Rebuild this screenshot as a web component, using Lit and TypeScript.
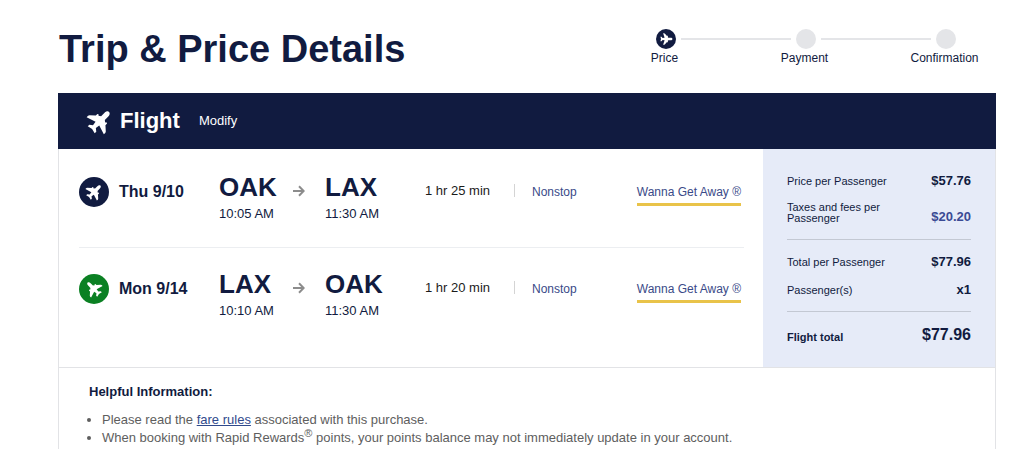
import { LitElement, html, css } from "lit";
import { customElement, property } from "lit/decorators.js";

type Heading = "north-east" | "north-west" | "east";

@customElement("plane-icon")
class PlaneIcon extends LitElement {
  @property({ reflect: true }) heading: Heading = "north-east";

  static styles = css`
    :host {
      display: block;
      flex: none;
      width: 24px;
      height: 24px;
    }
    svg {
      display: block;
      width: 100%;
      height: 100%;
      fill: currentColor;
      transform: rotate(45deg);
    }
    :host([heading="north-west"]) svg {
      transform: rotate(-45deg);
    }
    :host([heading="east"]) svg {
      transform: rotate(90deg);
    }
  `;

  render() {
    return html`<svg viewBox="-12 -12 24 24" overflow="visible" aria-hidden="true">
      <path
        d="M0-15.5C1.9-15.5 3-13.4 3-11.2V-5.6L5.6-3.6V-4.4Q6.7-5.5 7.8-4.4V-1.8L13.2 3Q14.3 4.2 13.9 6.9L3 3.4 2.3 8.2 5.6 10.8V13.4L0 12-5.6 13.4V10.8L-2.3 8.2-3 3.4-13.9 6.9Q-14.3 4.2-13.2 3L-7.8-1.8V-4.4Q-6.7-5.5-5.6-4.4V-3.6L-3-5.6V-11.2C-3-13.4-1.9-15.5 0-15.5Z"
      />
    </svg>`;
  }
}

@customElement("booking-steps")
class BookingSteps extends LitElement {
  static styles = css`
    ol {
      display: grid;
      grid-template-columns: repeat(3, 140px);
      margin: 0;
      padding: 0;
      list-style: none;
      font-size: 12px;
      line-height: 18px;
    }
    li {
      display: grid;
      grid-template-columns: 1fr 20px 1fr;
      align-items: center;
      column-gap: 5px;
    }
    .line {
      height: 2px;
      background: #e4e5e8;
    }
    .line.blank {
      background: none;
    }
    .dot {
      display: grid;
      place-items: center;
      height: 20px;
      border-radius: 50%;
      background: #e4e5e8;
      color: #fff;
    }
    .dot.current {
      background: #111b40;
    }
    .dot plane-icon {
      width: 10px;
      height: 10px;
    }
    .label {
      grid-column: 1 / -1;
      padding-right: 3px;
      text-align: center;
    }
  `;

  render() {
    const steps = ["Price", "Payment", "Confirmation"];
    return html`<ol>
      ${steps.map(
        (step, i) => html`<li>
          <span class="line ${i === 0 ? "blank" : ""}"></span>
          <span class="dot ${i === 0 ? "current" : ""}">
            ${i === 0 ? html`<plane-icon heading="east"></plane-icon>` : ""}
          </span>
          <span class="line ${i === steps.length - 1 ? "blank" : ""}"></span>
          <span class="label">${step}</span>
        </li>`
      )}
    </ol>`;
  }
}

interface Leg {
  date: string;
  from: string;
  departs: string;
  to: string;
  arrives: string;
  duration: string;
  returning: boolean;
}

@customElement("flight-leg")
class FlightLeg extends LitElement {
  @property({ attribute: false }) leg!: Leg;

  static styles = css`
    :host {
      display: grid;
      grid-template-columns: 30px 110px 74px 32px 100px 89px 18px 1fr auto;
      align-items: start;
      height: 98px;
      box-sizing: border-box;
      padding: 23px 3px 0 0;
    }
    .badge {
      display: grid;
      place-items: center;
      width: 30px;
      height: 30px;
      margin-top: 5px;
      border-radius: 50%;
      background: #111b40;
      color: #fff;
    }
    .badge.returning {
      background: #0b8023;
    }
    .badge plane-icon {
      width: 14px;
      height: 14px;
    }
    .date {
      margin: 10px 0 0 10px;
      font-size: 16px;
      line-height: 20px;
      font-weight: bold;
    }
    .code {
      font-size: 26px;
      line-height: 30px;
      font-weight: bold;
    }
    .time {
      font-size: 13px;
      line-height: 24px;
    }
    .arrow {
      margin-top: 13px;
      width: 12px;
      height: 12px;
      fill: none;
      stroke: #8c8c8c;
      stroke-width: 2;
    }
    .duration {
      margin-top: 11px;
      color: #1b1b1b;
      font-size: 13px;
      line-height: 16px;
    }
    .divider {
      width: 1px;
      height: 13px;
      margin-top: 12px;
      background: #d4d4d4;
    }
    button {
      margin: 11px 0 0;
      padding: 0;
      border: 0;
      background: none;
      color: #3a4a88;
      font: 12px/18px "Liberation Sans", Arial, sans-serif;
      text-align: left;
      cursor: pointer;
      justify-self: start;
    }
    .fare {
      padding-bottom: 2px;
      border-bottom: 3px solid #e9c349;
    }
  `;

  render() {
    const l = this.leg;
    return html`
      <span class="badge ${l.returning ? "returning" : ""}">
        <plane-icon heading=${l.returning ? "north-west" : "north-east"}></plane-icon>
      </span>
      <span class="date">${l.date}</span>
      <div>
        <div class="code">${l.from}</div>
        <div class="time">${l.departs}</div>
      </div>
      <svg class="arrow" viewBox="0 0 12 12" aria-hidden="true">
        <path d="M0 6H10.5M6 1.3 10.7 6 6 10.7" />
      </svg>
      <div>
        <div class="code">${l.to}</div>
        <div class="time">${l.arrives}</div>
      </div>
      <span class="duration">${l.duration}</span>
      <span class="divider"></span>
      <button type="button">Nonstop</button>
      <button type="button" class="fare">Wanna Get Away ®</button>
    `;
  }
}

@customElement("price-summary")
class PriceSummary extends LitElement {
  static styles = css`
    :host {
      display: block;
      padding: 20px 24px;
      background: #e6ebf8;
    }
    dl {
      margin: 0;
    }
    .row {
      display: flex;
      justify-content: space-between;
      align-items: center;
      height: 24px;
    }
    .row + .row {
      margin-top: 4px;
    }
    .row.tall {
      height: 28px;
      align-items: end;
    }
    .row.tall dt {
      padding-bottom: 1px;
    }
    .group + .group {
      margin-top: 14px;
      padding-top: 10px;
      border-top: 1px solid #c3c8d3;
    }
    dt {
      max-width: 110px;
      font-size: 11px;
      line-height: 11px;
    }
    dd {
      margin: 0;
      font-size: 13px;
      line-height: 16px;
      font-weight: bold;
    }
    button {
      padding: 0;
      border: 0;
      background: none;
      color: #3a4a94;
      font: inherit;
      cursor: pointer;
    }
    .group + .group.total {
      margin-top: 9px;
      padding-top: 11px;
    }
    .total dt {
      padding-top: 4px;
      font-weight: bold;
    }
    .total dd {
      font-size: 16px;
    }
  `;

  render() {
    return html`<dl>
      <div class="group">
        <div class="row"><dt>Price per Passenger</dt><dd>$57.76</dd></div>
        <div class="row tall">
          <dt>Taxes and fees per Passenger</dt>
          <dd><button type="button">$20.20</button></dd>
        </div>
      </div>
      <div class="group">
        <div class="row"><dt>Total per Passenger</dt><dd>$77.96</dd></div>
        <div class="row"><dt>Passenger(s)</dt><dd>x1</dd></div>
      </div>
      <div class="group total">
        <div class="row"><dt>Flight total</dt><dd>$77.96</dd></div>
      </div>
    </dl>`;
  }
}

@customElement("app-root")
class AppRoot extends LitElement {
  private legs: Leg[] = [
    {
      date: "Thu 9/10",
      from: "OAK",
      departs: "10:05 AM",
      to: "LAX",
      arrives: "11:30 AM",
      duration: "1 hr 25 min",
      returning: false,
    },
    {
      date: "Mon 9/14",
      from: "LAX",
      departs: "10:10 AM",
      to: "OAK",
      arrives: "11:30 AM",
      duration: "1 hr 20 min",
      returning: true,
    },
  ];

  static styles = css`
    :host {
      display: block;
      height: 100vh;
      overflow: hidden;
      background: #fff;
      color: #111b40;
      font-family: "Liberation Sans", Arial, sans-serif;
    }
    .top {
      display: flex;
      justify-content: space-between;
      align-items: start;
      height: 93px;
      box-sizing: border-box;
      padding: 26px 18px 0 59px;
    }
    h1 {
      margin: 0;
      font-size: 38px;
      line-height: 46px;
      font-weight: bold;
      white-space: nowrap;
    }
    booking-steps {
      padding-top: 3px;
    }
    .card {
      margin: 0 38px 0 58px;
    }
    .bar {
      display: flex;
      align-items: center;
      height: 56px;
      padding-left: 31px;
      background: #111b40;
      color: #fff;
    }
    .bar plane-icon {
      width: 21px;
      height: 21px;
    }
    h2 {
      margin: 0 19px 0 10px;
      font-size: 22px;
      line-height: 28px;
    }
    .bar a {
      color: inherit;
      font-size: 13px;
      line-height: 16px;
      text-decoration: none;
    }
    .content {
      border: solid #e2e3e6;
      border-width: 0 1px;
    }
    .booking {
      display: grid;
      grid-template-columns: 1fr 232px;
      border-bottom: 1px solid #e2e3e6;
    }
    .legs {
      padding: 0 19px 22px 20px;
    }
    flight-leg + flight-leg {
      border-top: 1px solid #eceef1;
      padding-top: 21px;
    }
    .info {
      padding: 15px 30px;
      font-size: 13px;
      line-height: 18px;
    }
    h3 {
      margin: 0 0 10px;
      font-size: 13px;
      line-height: 18px;
    }
    ul {
      margin: 0;
      padding-left: 13px;
      color: #5e5e5e;
    }
    .info a {
      color: #304a8c;
    }
    sup {
      font-size: 11px;
      line-height: 0;
    }
  `;

  render() {
    return html`
      <header class="top">
        <h1>Trip &amp; Price Details</h1>
        <booking-steps></booking-steps>
      </header>
      <main class="card">
        <div class="bar">
          <plane-icon></plane-icon>
          <h2>Flight</h2>
          <a href="#modify">Modify</a>
        </div>
        <div class="content">
          <div class="booking">
            <div class="legs">
              ${this.legs.map((leg) => html`<flight-leg .leg=${leg}></flight-leg>`)}
            </div>
            <price-summary></price-summary>
          </div>
          <section class="info">
            <h3>Helpful Information:</h3>
            <ul>
              <li>Please read the <a href="#fare-rules">fare rules</a> associated with this purchase.</li>
              <li>
                When booking with Rapid Rewards<sup>®</sup> points, your points balance may not
                immediately update in your account.
              </li>
            </ul>
          </section>
        </div>
      </main>
    `;
  }
}
